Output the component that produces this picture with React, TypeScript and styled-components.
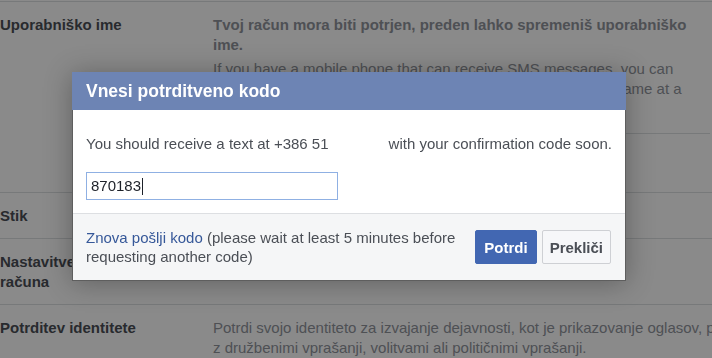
import { FC } from "react";
import styled, { createGlobalStyle } from "styled-components";

const GlobalStyle = createGlobalStyle`
  html, body {
    margin: 0;
    padding: 0;
    width: 712px;
    height: 358px;
    overflow: hidden;
    background: #fff;
  }
  body {
    font-family: "Liberation Sans", Arial, sans-serif;
    font-size: 15px;
    line-height: 20px;
    color: #1d2129;
  }
`

type Setting = {
  label: string
  desc?: string
  wrap?: string
}

const settings: Setting[] = [
  { label: "Stik" },
  { label: "Nastavitve spominskega računa" },
  {
    label: "Potrditev identitete",
    desc: "Potrdi svojo identiteto za izvajanje dejavnosti, kot je prikazovanje oglasov, povezanih",
    wrap: "z družbenimi vprašanji, volitvami ali političnimi vprašanji.",
  },
]

const App: FC = () => {
  return (
    <>
      <GlobalStyle />
      <Page>
        <Row>
          <Label>Uporabniško ime</Label>
          <EditArea>
            <Notice>Tvoj račun mora biti potrjen, preden lahko spremeniš uporabniško ime.</Notice>
            <Desc>
              If you have a mobile phone that can receive SMS messages, you can confirm your account
              by text message and change your username at a convenient time.
            </Desc>
            <EditFooter>
              <PageButton $primary>Shrani spremembe</PageButton>
              <PageButton>Prekliči</PageButton>
            </EditFooter>
          </EditArea>
        </Row>
        {settings.map((s) => (
          <Row key={s.label} $compact>
            <Label>{s.label}</Label>
            <Desc>
              {s.desc}
              {s.wrap && <br />}
              {s.wrap}
            </Desc>
          </Row>
        ))}
      </Page>
      <Overlay />
      <Dialog role="dialog">
        <DialogHeader>Vnesi potrditveno kodo</DialogHeader>
        <DialogBody>
          <Message>
            <span>You should receive a text at +386 51</span>
            <span>with your confirmation code soon.</span>
          </Message>
          <CodeField role="textbox">
            870183
            <Caret />
          </CodeField>
        </DialogBody>
        <DialogFooter>
          <FooterText>
            <Link href="#">Znova pošlji kodo</Link> (please wait at least 5 minutes before requesting
            another code)
          </FooterText>
          <Buttons>
            <Button $primary>Potrdi</Button>
            <Button>Prekliči</Button>
          </Buttons>
        </DialogFooter>
      </Dialog>
    </>
  )
}

export default App

const Page = styled.div`
  width: 820px;
  padding-top: 1px;
`

const Row = styled.div<{ $compact?: boolean }>`
  display: grid;
  grid-template-columns: 213px 1fr;
  border-top: 1px solid #dddfe2;
  padding: 13px 0 ${(p) => (p.$compact ? "12px" : "0")};
`

const Label = styled.div`
  width: 190px;
  font-weight: bold;
  color: #4b4f56;
`

const EditArea = styled.div`
  width: 497px;
`

const Notice = styled.div`
  font-weight: bold;
  color: #90949c;
`

const Desc = styled.div`
  margin-top: 4px;
  color: #90949c;
  ${Row} > & {
    margin-top: 0;
  }
`

const EditFooter = styled.div`
  display: flex;
  gap: 5px;
  margin-top: 14px;
  padding: 12px 0;
  height: 34px;
  border-top: 1px solid #dddfe2;
`

const PageButton = styled.div<{ $primary?: boolean }>`
  padding: 0 8px;
  line-height: 32px;
  border-radius: 2px;
  font-weight: bold;
  border: 1px solid ${(p) => (p.$primary ? "#4267b2" : "#ced0d4")};
  background: ${(p) => (p.$primary ? "#4267b2" : "#f6f7f9")};
  color: ${(p) => (p.$primary ? "#fff" : "#4b4f56")};
`

const Overlay = styled.div`
  position: fixed;
  inset: 0;
  background: rgba(0, 0, 0, 0.46);
`

const Dialog = styled.div`
  position: absolute;
  left: 72px;
  top: 72px;
  width: 552px;
  border: 1px solid rgba(40, 40, 40, 0.75);
  border-top: 0;
  background: #fff;
  box-shadow: 0 2px 26px rgba(0, 0, 0, 0.3);
`

const DialogHeader = styled.div`
  height: 38px;
  margin: 0 -1px;
  padding: 0 13px 0 14px;
  line-height: 38px;
  background: #6d84b4;
  color: #fff;
  font-size: 17.5px;
  font-weight: bold;
`

const DialogBody = styled.div`
  padding: 24px 13px 13px;
`

const Message = styled.div`
  display: flex;
  justify-content: space-between;
  color: #4b4f56;
`

const CodeField = styled.div`
  display: flex;
  align-items: center;
  box-sizing: border-box;
  width: 252px;
  height: 28px;
  margin-top: 18px;
  padding: 0 4px;
  border: 1px solid #8fb0e3;
  color: #1d2129;
`

const Caret = styled.span`
  width: 1px;
  height: 17px;
  margin-left: 1px;
  background: #1d2129;
`

const DialogFooter = styled.div`
  display: flex;
  align-items: center;
  height: 66px;
  padding: 0 14px 0 13px;
  border-top: 1px solid #dddfe2;
  background: #f5f6f7;
`

const FooterText = styled.div`
  flex: 1;
  margin-right: 14px;
  color: #4b4f56;
  line-height: 19px;
`

const Link = styled.a`
  color: #365899;
  text-decoration: none;
`

const Buttons = styled.div`
  display: flex;
  gap: 5px;
`

const Button = styled.button<{ $primary?: boolean }>`
  height: 34px;
  padding: 0 ${(p) => (p.$primary ? "8px" : "7px")};
  border-radius: 2px;
  font-family: inherit;
  font-size: 15px;
  font-weight: bold;
  border: 1px solid ${(p) => (p.$primary ? "#4267b2" : "#ced0d4")};
  background: ${(p) => (p.$primary ? "#4267b2" : "#f6f7f9")};
  color: ${(p) => (p.$primary ? "#fff" : "#4b4f56")};
`
